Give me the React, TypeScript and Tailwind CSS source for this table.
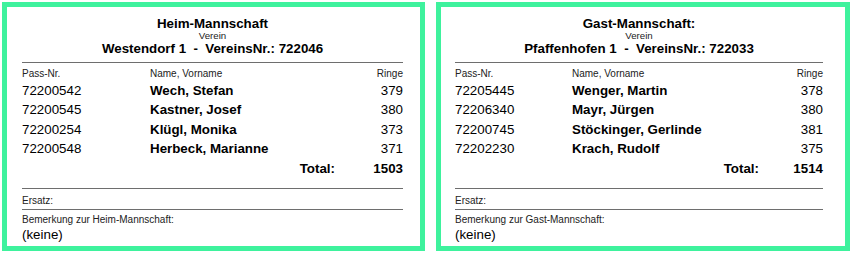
import React from "react";

type Player = { pass: string; name: string; ringe: number };

type Team = {
  title: string;
  club: string;
  nr: string;
  players: Player[];
  total: number;
  remarkLabel: string;
  boxClass: string;
  nameOffset: string;
  totalGap: string;
};

const teams: Team[] = [
  {
    title: "Heim-Mannschaft",
    club: "Westendorf 1",
    nr: "722046",
    players: [
      { pass: "72200542", name: "Wech, Stefan", ringe: 379 },
      { pass: "72200545", name: "Kastner, Josef", ringe: 380 },
      { pass: "72200254", name: "Klügl, Monika", ringe: 373 },
      { pass: "72200548", name: "Herbeck, Marianne", ringe: 371 },
    ],
    total: 1503,
    remarkLabel: "Bemerkung zur Heim-Mannschaft:",
    boxClass: "w-[423px] pl-[15px] pr-[17px]",
    nameOffset: "w-[128px]",
    totalGap: "w-[68px]",
  },
  {
    title: "Gast-Mannschaft:",
    club: "Pfaffenhofen 1",
    nr: "722033",
    players: [
      { pass: "72205445", name: "Wenger, Martin", ringe: 378 },
      { pass: "72206340", name: "Mayr, Jürgen", ringe: 380 },
      { pass: "72200745", name: "Stöckinger, Gerlinde", ringe: 381 },
      { pass: "72202230", name: "Krach, Rudolf", ringe: 375 },
    ],
    total: 1514,
    remarkLabel: "Bemerkung zur Gast-Mannschaft:",
    boxClass: "w-[414px] pl-[14px] pr-[22px]",
    nameOffset: "w-[117px]",
    totalGap: "w-[64px]",
  },
];

function TeamCard({ team }: { team: Team }) {
  return (
    <div
      className={`h-[249px] border-[5px] border-[#3ef29d] bg-white pt-[8.5px] text-black ${team.boxClass}`}
    >
      {/* Header */}
      <div className="text-center">
        <div className="text-[13.33px] font-bold leading-[15px]">{team.title}</div>
        <div className="text-[9.7px] leading-[10px] text-[#222]">Verein</div>
        <div className="text-[13.33px] font-bold leading-[16px] whitespace-pre">
          {`${team.club}  -  VereinsNr.: ${team.nr}`}
        </div>
      </div>

      <div className="mt-[5.5px] h-px bg-[#6e6e6e]" />

      {/* Column heads */}
      <div className="mt-[4.5px] flex text-[10px] leading-[12px] text-[#222]">
        <div className={team.nameOffset}>Pass-Nr.</div>
        <div className="flex-1">Name, Vorname</div>
        <div>Ringe</div>
      </div>

      {/* Players */}
      <div className="mt-[1px]">
        {team.players.map((p) => (
          <div key={p.pass} className="flex text-[13.33px] leading-[19.5px]">
            <div className={team.nameOffset}>{p.pass}</div>
            <div className="flex-1 font-bold">{p.name}</div>
            <div>{p.ringe}</div>
          </div>
        ))}
        <div className="flex justify-end text-[13.33px] font-bold leading-[19.5px]">
          <div>Total:</div>
          <div className={`${team.totalGap} text-right`}>{team.total}</div>
        </div>
      </div>

      {/* Ersatz */}
      <div className="mt-[10px] h-px bg-[#6e6e6e]" />
      <div className="mt-[6px] text-[10px] leading-[12px] text-[#222]">Ersatz:</div>
      <div className="mt-[2px] h-px bg-[#6e6e6e]" />

      {/* Bemerkung */}
      <div className="mt-[4px] text-[10px] leading-[12px] text-[#222]">{team.remarkLabel}</div>
      <div className="mt-[1px] text-[13.33px] leading-[16px]">(keine)</div>
    </div>
  );
}

export default function App() {
  return (
    <div
      className="flex h-[256px] w-[854px] gap-[11px] bg-white pl-[2px] pt-[2px]"
      style={{ fontFamily: '"Liberation Sans", Arial, sans-serif' }}
    >
      {teams.map((t) => (
        <TeamCard key={t.title} team={t} />
      ))}
    </div>
  );
}
